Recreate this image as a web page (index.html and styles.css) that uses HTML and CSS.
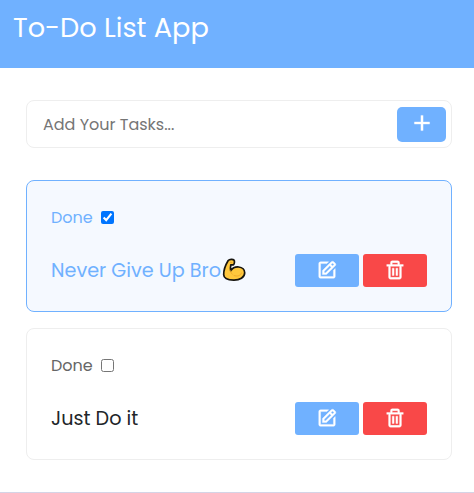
FILE: index.html
```html
<!DOCTYPE html>
<html lang="en">
<head>
<meta charset="utf-8">
<title>To-Do List App</title>
<link rel="stylesheet" href="styles.css">
</head>
<body>
<svg class="defs" aria-hidden="true">
  <symbol id="edit" viewBox="0 0 24 24"><path d="m7 17.013 4.413-.015 9.632-9.54c.378-.378.586-.88.586-1.414s-.208-1.036-.586-1.414l-1.586-1.586c-.756-.756-2.075-.752-2.825-.003L7 12.583v4.43zM18.045 4.458l1.589 1.583-1.597 1.582-1.586-1.585 1.594-1.58zM9 13.417l6.03-5.973 1.586 1.586-6.029 5.971L9 15.006v-1.589z"/><path d="M5 21h14c1.103 0 2-.897 2-2v-8.668l-2 2V19H5V5h6.847l2-2H5c-1.103 0-2 .897-2 2v14c0 1.103.897 2 2 2z"/></symbol>
  <symbol id="trash" viewBox="0 0 24 24"><path d="M5 20a2 2 0 0 0 2 2h10a2 2 0 0 0 2-2V8h2V6h-4V4a2 2 0 0 0-2-2H9a2 2 0 0 0-2 2v2H3v2h2zM9 4h6v2H9zM7 8h10v12H7V8z"/><path d="M9 10h2v8H9zm4 0h2v8h-2z"/></symbol>
</svg>
<header class="header"><h1 class="title">To-Do List App</h1></header>
<main class="main">
  <form class="add">
    <input class="add-input" type="text" placeholder="Add Your Tasks...">
    <button class="add-btn" type="button" aria-label="Add"><svg class="plus" viewBox="0 0 24 24"><path d="M19 11h-6V5h-2v6H5v2h6v6h2v-6h6z"/></svg></button>
  </form>
  <section class="card done">
    <label class="check"><span class="check-text">Done</span><input class="box" type="checkbox" checked></label>
    <div class="row">
      <div class="task"><span class="task-one">Never Give Up Bro</span><svg class="arm" viewBox="0 0 24 24"><path d="M6.2 2.5C7.500 1 11 .9 12 2.100c.8 1 .5 3.900-.5 4.600-.7.5-2 .1-2.700.2-.4 2-.5 4-.1 5.800 1.800-2.600 4.800-4 8-3.700 3.700.3 6 2.800 6 5.700 0 4.800-5 7.500-11 7.400-5.700-.1-9.900-2.100-10-5.400C1.600 12.500 3.800 6.500 6.200 2.500z" fill="#ffc83d" stroke="#17150f" stroke-width="1.700" stroke-linejoin="round"/><path d="M8.700 12.700c-.1 1.500.4 2.600 1.500 3.400M12 17.500c3 1.300 6.500.4 7.500-2.500M8.300 4.300l1.800.5" fill="none" stroke="#f0aa2a" stroke-width="1" stroke-linecap="round"/></svg></div>
      <div class="actions">
        <button class="btn edit" type="button" aria-label="Edit"><svg class="icon"><use href="#edit"/></svg></button>
        <button class="btn delete" type="button" aria-label="Delete"><svg class="icon"><use href="#trash"/></svg></button>
      </div>
    </div>
  </section>
  <section class="card">
    <label class="check"><span class="check-text">Done</span><input class="box" type="checkbox"></label>
    <div class="row">
      <div class="task"><span class="task-two">Just Do it</span></div>
      <div class="actions">
        <button class="btn edit" type="button" aria-label="Edit"><svg class="icon"><use href="#edit"/></svg></button>
        <button class="btn delete" type="button" aria-label="Delete"><svg class="icon"><use href="#trash"/></svg></button>
      </div>
    </div>
  </section>
</main>
</body>
</html>
```
FILE: styles.css
```css
* { box-sizing: border-box; }
body {
  margin: 0;
  height: 493px;
  overflow: hidden;
  display: flex;
  flex-direction: column;
  background: #fff;
  color: #212529;
  font-family: Poppins, Inter, sans-serif;
  font-size: 16px;
  line-height: 24px;
  border-bottom: 1px solid #d4d4e6;
}
.defs { display: none; }
.header { height: 68px; flex: none; padding: 7px 13px; background: #70b1ff; }
.title { margin: 0; font-size: 27.2px; font-weight: 400; line-height: 42px; color: #fff; white-space: nowrap; }
.main { padding: 32px 22px 0 26px; }
.add {
  display: flex;
  align-items: center;
  height: 48px;
  margin-bottom: 32px;
  padding: 0 5px 0 16px;
  border: 1px solid #eee;
  border-radius: 8px;
}
.add-input { flex: 1; min-width: 0; padding: 2px 0 0; border: 0; outline: 0; background: none; font: inherit; }
.add-input::placeholder { color: #757575; }
.add-btn { display: flex; align-items: center; justify-content: center; width: 49px; height: 35px; padding: 0; border: 0; border-radius: 5px; background: #70b1ff; }
.plus { width: 26px; height: 26px; margin-top: -2px; fill: #fff; stroke: #fff; stroke-width: .3; }
.card { height: 132px; margin-bottom: 16px; padding: 24px; border: 1px solid #eee; border-radius: 8px; }
.done { border-color: #70b1ff; background: #f5f9ff; color: #70b1ff; }
.check { display: flex; align-items: center; height: 24px; color: #666; }
.done .check { color: #70b1ff; }
.check-text { width: 42px; padding-top: 2px; }
.box { width: 13px; height: 13px; margin: 0 0 0 8px; accent-color: #0075ff; }
.row { display: flex; justify-content: space-between; height: 33px; margin-top: 25px; }
.task { display: flex; align-items: center; font-size: 19.2px; white-space: nowrap; }
.task-one { width: 171px; }
.arm { width: 24px; height: 24px; margin-top: -2px; }
.actions { display: flex; gap: 4px; }
.btn { display: flex; align-items: center; justify-content: center; width: 64px; height: 33px; padding: 0; border: 0; border-radius: 3px; }
.edit { background: #70b1ff; }
.delete { background: #f94848; }
.icon { width: 22px; height: 22px; margin-top: -1px; fill: #fff; stroke: #fff; stroke-width: .4; }
```
